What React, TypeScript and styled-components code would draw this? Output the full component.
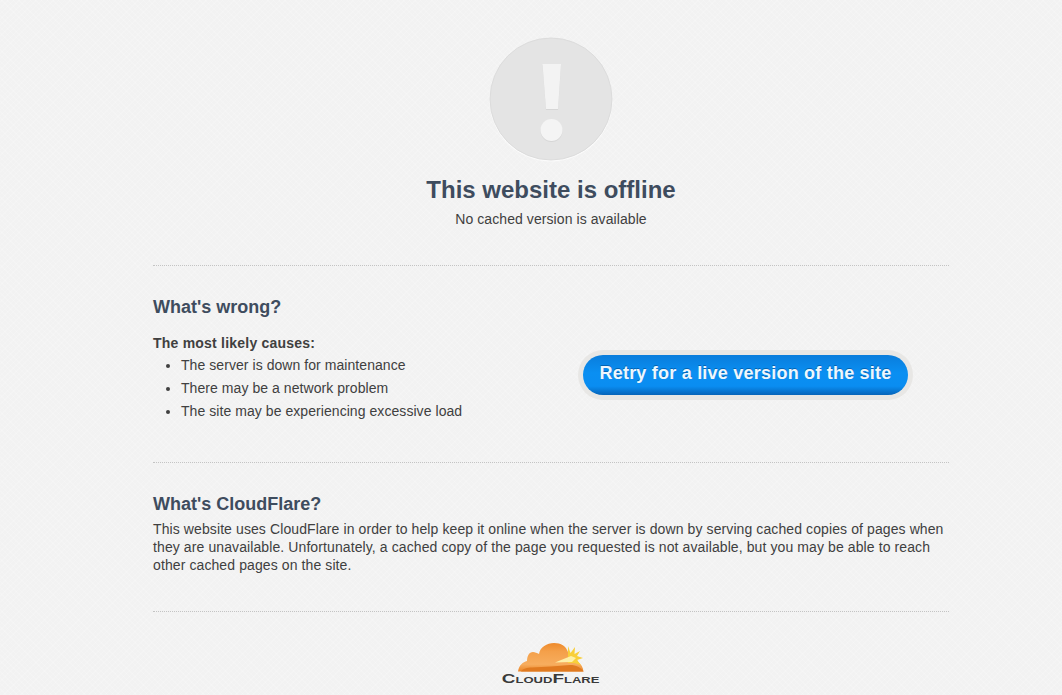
import styled, { createGlobalStyle } from 'styled-components'

const GlobalStyle = createGlobalStyle`
    html, body {
        margin: 0;
        padding: 0;
        height: 695px;
        overflow: hidden;
        background-color: #f2f2f2;
        background-image:
            repeating-linear-gradient(45deg, rgba(255, 255, 255, 0.14) 0 1px, transparent 1px 4px),
            repeating-linear-gradient(-45deg, rgba(255, 255, 255, 0.14) 0 1px, transparent 1px 4px);
        font-family: "Liberation Sans", Arial, sans-serif;
        color: #404040;
    }
`

const CAUSES = [
    'The server is down for maintenance',
    'There may be a network problem',
    'The site may be experiencing excessive load',
]

const OfflineIcon = () => (
    <svg width="126" height="126" viewBox="0 0 126 126">
        <circle cx="63" cy="64" r="61.5" fill="#fbfbfb" />
        <circle cx="63" cy="63" r="61" fill="#e4e4e4" stroke="#dcdcdc" strokeWidth="1" />
        <path d="M54.5 28 H73 L70 73 H58 Z" fill="#d6d6d6" transform="translate(0 1)" />
        <path d="M54.5 28 H73 L70 73 H58 Z" fill="#f3f3f3" />
        <circle cx="63.5" cy="95" r="11" fill="#d6d6d6" />
        <circle cx="63.5" cy="94" r="11" fill="#f4f4f4" />
    </svg>
)

const Logo = () => (
    <LogoBox>
        <svg width="66" height="29" viewBox="0 0 66 29">
            <defs>
                <linearGradient id="cloudFill" x1="0" y1="0" x2="0" y2="1">
                    <stop offset="0" stopColor="#ee8a2b" />
                    <stop offset="0.3" stopColor="#f4a04a" />
                    <stop offset="0.75" stopColor="#f7ad5e" />
                    <stop offset="1" stopColor="#ea8425" />
                </linearGradient>
            </defs>
            <path
                d="M0 28.5 C1 22 5 19 9 18 C9 13 11 9 15 9 C17 9 19 10 21 11 C22 4 29 0 36 0 C43 0 48 3 50 9 C55 12 59 15 60 19 C63 21 65 24 65.5 28.5 Z"
                fill="url(#cloudFill)"
            />
            <path d="M3 28.5 C5 25.5 9 24.5 14 24.5 C26 24 40 23 52 22 C58 22 63 24.5 65.5 28.5 Z" fill="#e07a20" />
            <path d="M50 3 L52.5 10 L57 4 L56.5 11 L62 8 L59 13 L65 15 L59 17 L63 22 L56 20 L50 20 Z" fill="#f8cf3a" />
            <path d="M37 19.5 L53 13 L58 15 L54 19 Z" fill="#fdf0a8" />
        </svg>
        <LogoText>CloudFlare</LogoText>
    </LogoBox>
)

const App = () => {
    return (
        <Page>
            <GlobalStyle />
            <Header>
                <OfflineIcon />
                <Title>This website is offline</Title>
                <Subtitle>No cached version is available</Subtitle>
            </Header>
            <WrongSection>
                <div>
                    <SectionTitle>What's wrong?</SectionTitle>
                    <Lead>The most likely causes:</Lead>
                    <CauseList>
                        {CAUSES.map((cause) => (
                            <Cause key={cause}>{cause}</Cause>
                        ))}
                    </CauseList>
                </div>
                <RetryHalo>
                    <RetryButton>Retry for a live version of the site</RetryButton>
                </RetryHalo>
            </WrongSection>
            <AboutSection>
                <SectionTitle>What's CloudFlare?</SectionTitle>
                <Paragraph>
                    This website uses CloudFlare in order to help keep it online when the server is down by serving cached copies of pages when they are unavailable. Unfortunately, a cached copy of the page you requested is not available, but you may be able to reach other cached pages on the site.
                </Paragraph>
            </AboutSection>
            <Logo />
        </Page>
    )
}

const Page = styled.div`
    width: 796px;
    margin-left: 153px;
    font-size: 14px;
    line-height: 20px;
`

const Header = styled.header`
    display: flex;
    flex-direction: column;
    align-items: center;
    padding-top: 36px;
    height: 266px;
    box-sizing: border-box;
    border-bottom: 1px dotted #c4c4c4;
`

const Title = styled.h1`
    margin: 12px 0 0;
    font-size: 24px;
    line-height: 32px;
    font-weight: bold;
    color: #3e4c5e;
`

const Subtitle = styled.p`
    margin: 3px 0 0;
    letter-spacing: 0.08px;
`

const WrongSection = styled.section`
    display: flex;
    justify-content: space-between;
    align-items: flex-start;
    height: 197px;
    box-sizing: border-box;
    padding: 29px 36px 0 0;
    border-bottom: 1px dotted #c4c4c4;
`

const SectionTitle = styled.h2`
    margin: 0;
    font-size: 18px;
    line-height: 24px;
    font-weight: bold;
    color: #3e4c5e;
`

const Lead = styled.p`
    margin: 14px 0 0;
    font-weight: bold;
    letter-spacing: 0.22px;
`

const CauseList = styled.ul`
    margin: 1px 0 0;
    padding: 0 0 0 28px;
    list-style: disc;
`

const Cause = styled.li`
    line-height: 23px;
    letter-spacing: 0.06px;
`

const RetryHalo = styled.div`
    margin-top: 55px;
    padding: 5px;
    border-radius: 26px;
    background: #e8e7e5;
`

const RetryButton = styled.button`
    display: block;
    width: 325px;
    height: 40px;
    padding: 0 0 4px;
    border: 0;
    border-radius: 20px;
    background: linear-gradient(#0a7ddc, #0a8ff2 45%, #0a8df1 78%, #0664b8);
    font-family: inherit;
    font-size: 18px;
    font-weight: bold;
    letter-spacing: 0.22px;
    color: #eef7fd;
    text-shadow: 0 -1px 0 rgba(0, 60, 120, 0.5);
`

const AboutSection = styled.section`
    height: 149px;
    box-sizing: border-box;
    padding-top: 29px;
    border-bottom: 1px dotted #c4c4c4;
`

const Paragraph = styled.p`
    margin: 4px 0 0;
    line-height: 18px;
    letter-spacing: 0.1px;
`

const LogoBox = styled.div`
    display: flex;
    flex-direction: column;
    align-items: center;
    margin-top: 31px;
`

const LogoText = styled.span`
    font-variant: small-caps;
    font-size: 13px;
    line-height: 13px;
    font-weight: bold;
    color: #3a3a3a;
    transform: scaleX(1.45);
`

export default App
